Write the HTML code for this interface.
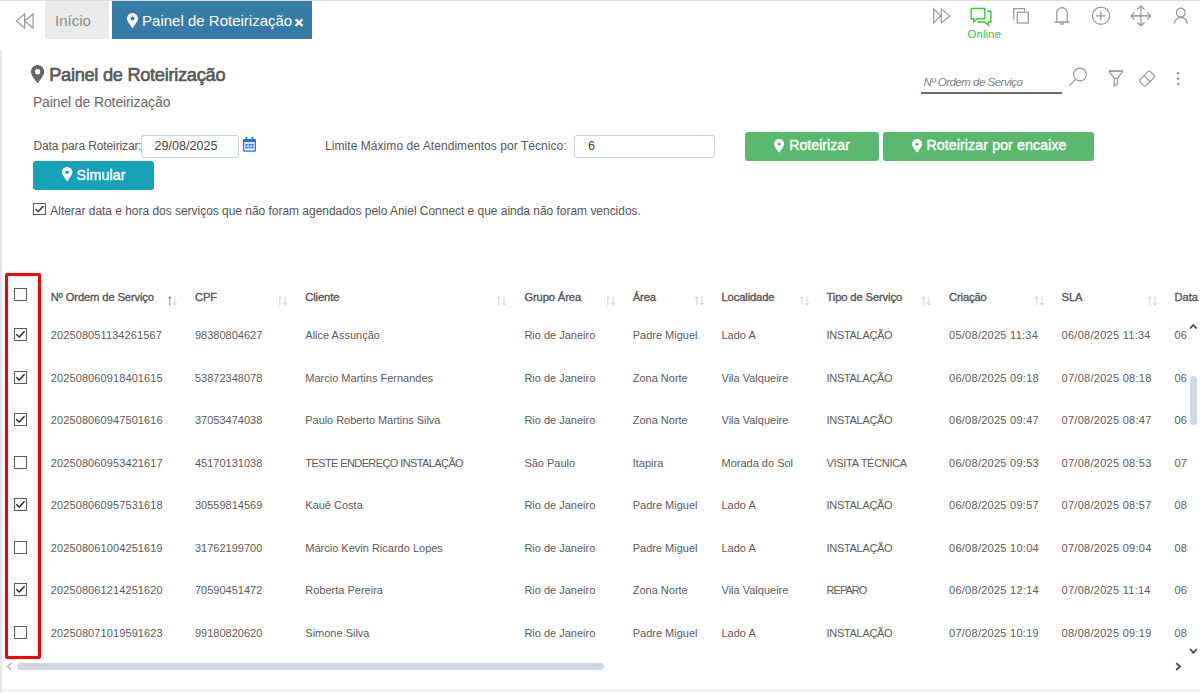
<!DOCTYPE html>
<html><head><meta charset="utf-8">
<style>
*{box-sizing:border-box}
html,body{margin:0;padding:0}
body{width:1200px;height:693px;overflow:hidden;position:relative;background:#fff;font-family:"Liberation Sans",sans-serif;color:#555}
.a{position:absolute;white-space:nowrap;line-height:1}
svg{position:absolute;overflow:visible}
.th{font-size:11.2px;font-weight:400;color:#555;-webkit-text-stroke:0.35px #555;letter-spacing:-0.12px}
.td{font-size:11px;color:#5a5a5a}
.cb{position:absolute;width:13px;height:13px;border:1px solid #5c5c5c;background:#fff}
.srt{position:absolute;width:11px;height:10px}
</style></head><body>

<!-- top bar -->
<div class="a" style="left:0;top:0;width:1200px;height:1px;background:#dcdcdc"></div>
<svg style="left:0;top:0" width="40" height="40" viewBox="0 0 40 40">
  <path d="M24.6 13.9 L16.4 21 L24.6 28.1 Z M33.1 13.9 L24.6 21 L33.1 28.1 Z" fill="none" stroke="#999" stroke-width="1.25" stroke-linejoin="miter"/>
</svg>
<div class="a" style="left:45px;top:1px;width:64px;height:38px;background:#ebebeb"></div>
<div class="a" style="left:55px;top:13.3px;font-size:15px;color:#8a8a8a">Início</div>
<div class="a" style="left:112px;top:1px;width:200px;height:38px;background:#367ca6"></div>
<svg style="left:127px;top:13px" width="11" height="14.8" viewBox="0 0 384 512" preserveAspectRatio="none"><path fill="#fff" d="M172.268 501.67C26.97 291.031 0 269.413 0 192 0 85.961 85.961 0 192 0s192 85.961 192 192c0 77.413-26.97 99.031-172.268 309.67-9.535 13.774-29.93 13.773-39.464 0zM192 262c38.66 0 70-31.34 70-70s-31.34-70-70-70-70 31.34-70 70 31.34 70 70 70z"/></svg>
<div class="a" style="left:142.1px;top:12.6px;font-size:15px;color:#fff">Painel de Roteirização</div>
<svg style="left:294px;top:17.5px" width="10" height="9" viewBox="0 0 10 9"><path d="M1.6 1.2 L8.4 7.9 M8.4 1.2 L1.6 7.9" stroke="#fff" stroke-width="2.2"/></svg>

<!-- right icons -->
<svg style="left:0;top:0" width="1200" height="45" viewBox="0 0 1200 45">
  <g fill="none" stroke="#999" stroke-width="1.2" stroke-linejoin="miter">
    <path d="M933.7 9 L940.6 15.9 L933.7 22.8 Z M941.3 9 L949.9 15.9 L941.3 22.8 Z"/>
  </g>
  <g fill="none" stroke="#33cc33" stroke-width="1.4" stroke-linejoin="miter">
    <path d="M971.2 8.5 H984.9 V18.7 H977.4 L973.8 21.9 V18.7 H971.2 Z"/>
    <path d="M987.1 11.3 H990.9 V22 H988.2 V25.1 L984.4 22 H977.1"/>
  </g>
  <g fill="none" stroke="#999" stroke-width="1.25">
    <path d="M1013.8 19.6 V8.7 H1024.6 V11.6"/>
    <rect x="1017.3" y="12.2" width="11" height="10.8"/>
    <path d="M1056.75 21.5 V12.8 A5.25 5.1 0 0 1 1067.25 12.8 V21.5"/>
    <path d="M1054.3 22.05 H1069.7" stroke-width="1.5"/>
    <path d="M1060.5 22.8 A1.5 1.6 0 0 0 1063.5 22.8"/>
    <circle cx="1101" cy="15.8" r="8.6" stroke-width="1.3"/>
    <path d="M1096 15.8 H1105.6 M1100.9 11.2 V20.3" stroke-width="1.3"/>
    <path d="M1130.9 15.9 H1150.9" stroke-width="1.6"/>
    <path d="M1140.9 5.9 V25.9"/>
    <path d="M1134.6 12.1 L1131 15.9 L1134.6 19.6 M1147.2 12.1 L1150.8 15.9 L1147.2 19.6 M1137.2 9.6 L1140.9 6 L1144.6 9.6 M1137.2 22.2 L1140.9 25.8 L1144.6 22.2" stroke-width="1.3"/>
    <circle cx="1180.8" cy="12.6" r="4.35" stroke-width="1.3"/>
    <path d="M1174.5 23.6 A6.4 6.2 0 0 1 1187.3 23.6" stroke-width="1.3"/>
  </g>
  <path d="M1062 6 L1063.4 8.2 H1060.6 Z" fill="#999"/>
</svg>
<div class="a" style="left:967.6px;top:29.4px;font-size:11.5px;color:#33cc33">Online</div>

<!-- left thin border and bottom strip -->
<div class="a" style="left:0;top:50px;width:2px;height:643px;background:#e3e7eb"></div>
<div class="a" style="left:2px;top:689px;width:1198px;height:4px;background:#f6f6f6"></div>

<!-- title -->
<svg style="left:31px;top:64.9px" width="13.2" height="18" viewBox="0 0 384 512" preserveAspectRatio="none"><path fill="#666" d="M172.268 501.67C26.97 291.031 0 269.413 0 192 0 85.961 85.961 0 192 0s192 85.961 192 192c0 77.413-26.97 99.031-172.268 309.67-9.535 13.774-29.93 13.773-39.464 0zM192 272c44.183 0 80-35.817 80-80s-35.817-80-80-80-80 35.817-80 80 35.817 80 80 80z"/></svg>
<div class="a" style="left:49.2px;top:66.3px;font-size:18.2px;color:#585858;-webkit-text-stroke:0.65px #585858;letter-spacing:-0.27px">Painel de Roteirização</div>
<div class="a" style="left:32.9px;top:94.5px;font-size:14px;color:#666;letter-spacing:-0.12px">Painel de Roteirização</div>

<!-- search -->
<div class="a" style="left:923.5px;top:75.9px;font-size:11.6px;font-style:italic;color:#808080;letter-spacing:-0.55px">Nº Ordem de Serviço</div>
<div class="a" style="left:921px;top:91.7px;width:141px;height:2px;background:#6a6a6a"></div>
<svg style="left:1060px;top:60px" width="130" height="35" viewBox="0 0 130 35">
  <circle cx="20" cy="14.6" r="6.4" fill="none" stroke="#999" stroke-width="1.3"/>
  <path d="M15.4 19.6 L9.2 25.6" stroke="#999" stroke-width="1.3"/>
  <path d="M48.7 11.1 H63.1 M49 11.1 L54.3 18.4 H57.5 L62.8 11.1 M54.3 18.4 V26 L57.5 23.7 V18.4" fill="none" stroke="#999" stroke-width="1.2" stroke-linejoin="miter"/>
  <path d="M63.1 11.1 H48.7" stroke="#999" stroke-width="1.5"/>
  <g transform="translate(87.05 18.6) rotate(-45)"><rect x="-7.3" y="-4.2" width="14.6" height="8.4" rx="1.6" fill="none" stroke="#999" stroke-width="1.2"/><path d="M0 -4.2 V4.2" stroke="#999" stroke-width="1.2"/></g>
  <circle cx="118.1" cy="13.2" r="1.3" fill="#999"/>
  <circle cx="118.1" cy="18.6" r="1.3" fill="#999"/>
  <circle cx="118.1" cy="24" r="1.3" fill="#999"/>
</svg>

<!-- form -->
<div class="a" style="left:33.4px;top:139.8px;font-size:12px;color:#555;letter-spacing:-0.12px">Data para Roteirizar:</div>
<div class="a" style="left:141.4px;top:135.4px;width:97.2px;height:22.2px;border:1px solid #ccd2da;border-radius:3px;background:#fff"></div>
<div class="a" style="left:154.6px;top:140.2px;font-size:12.6px;color:#444">29/08/2025</div>
<svg style="left:243px;top:137px" width="13" height="15" viewBox="0 0 13 15">
  <rect x="0" y="1.9" width="13" height="12.8" rx="1.3" fill="#1a75f0"/>
  <rect x="1.3" y="5.1" width="10.4" height="8.3" fill="#fff"/>
  <rect x="2.7" y="0" width="1.8" height="3" fill="#1a75f0"/>
  <rect x="8.5" y="0" width="1.8" height="3" fill="#1a75f0"/>
  <g fill="#1a75f0"><rect x="2.4" y="6.7" width="2.3" height="2"/><rect x="5.4" y="6.7" width="2.3" height="2"/><rect x="8.4" y="6.7" width="2.3" height="2"/><rect x="2.4" y="9.5" width="2.3" height="2"/><rect x="5.4" y="9.5" width="2.3" height="2"/><rect x="8.4" y="9.5" width="2.3" height="2"/></g>
</svg>
<div class="a" style="left:325px;top:139.8px;font-size:12px;color:#555;letter-spacing:0.06px">Limite Máximo de Atendimentos por Técnico:</div>
<div class="a" style="left:574px;top:135.3px;width:141px;height:22.7px;border:1px solid #ccd2da;border-radius:3px;background:#fff"></div>
<div class="a" style="left:588px;top:140.2px;font-size:12.6px;color:#444">6</div>

<div class="a" style="left:745px;top:132px;width:134px;height:29px;background:#5ab96f;border-radius:3px"></div>
<svg style="left:774px;top:138.5px" width="10.2" height="13.5" viewBox="0 0 384 512"><path fill="#fff" d="M172.268 501.67C26.97 291.031 0 269.413 0 192 0 85.961 85.961 0 192 0s192 85.961 192 192c0 77.413-26.97 99.031-172.268 309.67-9.535 13.774-29.93 13.773-39.464 0zM192 256c35.346 0 64-28.654 64-64s-28.654-64-64-64-64 28.654-64 64 28.654 64 64 64z"/></svg>
<div class="a" style="left:789.2px;top:137.8px;font-size:14.2px;color:#fff;-webkit-text-stroke:0.4px #fff">Roteirizar</div>
<div class="a" style="left:883px;top:132px;width:211px;height:29px;background:#5ab96f;border-radius:3px"></div>
<svg style="left:912px;top:138.5px" width="10.2" height="13.5" viewBox="0 0 384 512"><path fill="#fff" d="M172.268 501.67C26.97 291.031 0 269.413 0 192 0 85.961 85.961 0 192 0s192 85.961 192 192c0 77.413-26.97 99.031-172.268 309.67-9.535 13.774-29.93 13.773-39.464 0zM192 256c35.346 0 64-28.654 64-64s-28.654-64-64-64-64 28.654-64 64 28.654 64 64 64z"/></svg>
<div class="a" style="left:926.4px;top:137.8px;font-size:14.2px;color:#fff;-webkit-text-stroke:0.4px #fff;letter-spacing:0.1px">Roteirizar por encaixe</div>

<div class="a" style="left:33px;top:161px;width:121px;height:28.6px;background:#17a2b8;border-radius:3px"></div>
<svg style="left:62px;top:167px" width="10.4" height="14" viewBox="0 0 384 512"><path fill="#fff" d="M172.268 501.67C26.97 291.031 0 269.413 0 192 0 85.961 85.961 0 192 0s192 85.961 192 192c0 77.413-26.97 99.031-172.268 309.67-9.535 13.774-29.93 13.773-39.464 0zM192 256c35.346 0 64-28.654 64-64s-28.654-64-64-64-64 28.654-64 64 28.654 64 64 64z"/></svg>
<div class="a" style="left:76.6px;top:168.3px;font-size:14.2px;color:#fff;-webkit-text-stroke:0.4px #fff;letter-spacing:0.15px">Simular</div>

<div class="cb" style="left:33px;top:203px;width:12.5px;height:12px"></div>
<svg style="left:33px;top:203px" width="13" height="12" viewBox="0 0 13 12"><path d="M2.6 6 L5.2 8.6 L10.4 3" fill="none" stroke="#222" stroke-width="1.3"/></svg>
<div class="a" style="left:50.3px;top:204.8px;font-size:12px;color:#555;letter-spacing:-0.03px">Alterar data e hora dos serviços que não foram agendados pelo Aniel Connect e que ainda não foram vencidos.</div>

<!-- red highlight -->
<div class="a" style="left:5px;top:273px;width:36px;height:386px;border:3px solid #f00;border-radius:2px"></div>

<!--TABLE-->
<div class="a" style="left:0;top:270px;width:1200px;height:390px;overflow:hidden">
<div class="cb" style="left:14px;top:18.2px"></div>
<div class="a th" style="left:50.8px;top:21.79px">Nº Ordem de Serviço</div>
<svg style="left:167.0px;top:25.5px" width="11" height="10" viewBox="0 0 11 10"><path d="M2.8 9.5 V0.8 M1.1 2.5 L2.8 0.6 L4.5 2.5" fill="none" stroke="#8a8a8a" stroke-width="1"/><path d="M8 0.3 V9 M6.3 7.1 L8 9 L9.7 7.1" fill="none" stroke="#d2d2d2" stroke-width="1"/></svg>
<div class="a th" style="left:195px;top:21.79px">CPF</div>
<svg style="left:277.3px;top:25.5px" width="11" height="10" viewBox="0 0 11 10"><path d="M2.8 9.5 V0.8 M1.1 2.5 L2.8 0.6 L4.5 2.5" fill="none" stroke="#d2d2d2" stroke-width="1"/><path d="M8 0.3 V9 M6.3 7.1 L8 9 L9.7 7.1" fill="none" stroke="#d2d2d2" stroke-width="1"/></svg>
<div class="a th" style="left:305.3px;top:21.79px">Cliente</div>
<svg style="left:496.4px;top:25.5px" width="11" height="10" viewBox="0 0 11 10"><path d="M2.8 9.5 V0.8 M1.1 2.5 L2.8 0.6 L4.5 2.5" fill="none" stroke="#d2d2d2" stroke-width="1"/><path d="M8 0.3 V9 M6.3 7.1 L8 9 L9.7 7.1" fill="none" stroke="#d2d2d2" stroke-width="1"/></svg>
<div class="a th" style="left:524.4px;top:21.79px">Grupo Área</div>
<svg style="left:604.7px;top:25.5px" width="11" height="10" viewBox="0 0 11 10"><path d="M2.8 9.5 V0.8 M1.1 2.5 L2.8 0.6 L4.5 2.5" fill="none" stroke="#d2d2d2" stroke-width="1"/><path d="M8 0.3 V9 M6.3 7.1 L8 9 L9.7 7.1" fill="none" stroke="#d2d2d2" stroke-width="1"/></svg>
<div class="a th" style="left:632.7px;top:21.79px">Área</div>
<svg style="left:693.5px;top:25.5px" width="11" height="10" viewBox="0 0 11 10"><path d="M2.8 9.5 V0.8 M1.1 2.5 L2.8 0.6 L4.5 2.5" fill="none" stroke="#d2d2d2" stroke-width="1"/><path d="M8 0.3 V9 M6.3 7.1 L8 9 L9.7 7.1" fill="none" stroke="#d2d2d2" stroke-width="1"/></svg>
<div class="a th" style="left:721.5px;top:21.79px">Localidade</div>
<svg style="left:798.5px;top:25.5px" width="11" height="10" viewBox="0 0 11 10"><path d="M2.8 9.5 V0.8 M1.1 2.5 L2.8 0.6 L4.5 2.5" fill="none" stroke="#d2d2d2" stroke-width="1"/><path d="M8 0.3 V9 M6.3 7.1 L8 9 L9.7 7.1" fill="none" stroke="#d2d2d2" stroke-width="1"/></svg>
<div class="a th" style="left:826.5px;top:21.79px">Tipo de Serviço</div>
<svg style="left:921.0px;top:25.5px" width="11" height="10" viewBox="0 0 11 10"><path d="M2.8 9.5 V0.8 M1.1 2.5 L2.8 0.6 L4.5 2.5" fill="none" stroke="#d2d2d2" stroke-width="1"/><path d="M8 0.3 V9 M6.3 7.1 L8 9 L9.7 7.1" fill="none" stroke="#d2d2d2" stroke-width="1"/></svg>
<div class="a th" style="left:949.0px;top:21.79px">Criação</div>
<svg style="left:1033.6px;top:25.5px" width="11" height="10" viewBox="0 0 11 10"><path d="M2.8 9.5 V0.8 M1.1 2.5 L2.8 0.6 L4.5 2.5" fill="none" stroke="#d2d2d2" stroke-width="1"/><path d="M8 0.3 V9 M6.3 7.1 L8 9 L9.7 7.1" fill="none" stroke="#d2d2d2" stroke-width="1"/></svg>
<div class="a th" style="left:1061.6px;top:21.79px">SLA</div>
<svg style="left:1146.6px;top:25.5px" width="11" height="10" viewBox="0 0 11 10"><path d="M2.8 9.5 V0.8 M1.1 2.5 L2.8 0.6 L4.5 2.5" fill="none" stroke="#d2d2d2" stroke-width="1"/><path d="M8 0.3 V9 M6.3 7.1 L8 9 L9.7 7.1" fill="none" stroke="#d2d2d2" stroke-width="1"/></svg>
<div class="a th" style="left:1174.6px;top:21.79px">Data A</div>
<div class="cb" style="left:14px;top:58.0px"></div>
<svg style="left:14px;top:58.0px" width="13" height="13" viewBox="0 0 13 13"><path d="M2.2 6.3 L5.2 9 L10.6 3.3" fill="none" stroke="#222" stroke-width="1.35"/></svg>
<div class="a td" style="left:50.8px;top:59.80px;letter-spacing:0.1px;">202508051134261567</div>
<div class="a td" style="left:195px;top:59.80px;">98380804627</div>
<div class="a td" style="left:305.3px;top:59.80px;">Alice Assunção</div>
<div class="a td" style="left:524.4px;top:59.80px;">Rio de Janeiro</div>
<div class="a td" style="left:632.7px;top:59.80px;">Padre Miguel</div>
<div class="a td" style="left:721.5px;top:59.80px;">Lado A</div>
<div class="a td" style="left:826.5px;top:59.80px;letter-spacing:-0.3px;">INSTALAÇÃO</div>
<div class="a td" style="left:949.0px;top:59.80px;letter-spacing:0.27px;">05/08/2025 11:34</div>
<div class="a td" style="left:1061.6px;top:59.80px;letter-spacing:0.27px;">06/08/2025 11:34</div>
<div class="a td" style="left:1174.6px;top:59.80px;">06</div>
<div class="cb" style="left:14px;top:101.0px"></div>
<svg style="left:14px;top:101.0px" width="13" height="13" viewBox="0 0 13 13"><path d="M2.2 6.3 L5.2 9 L10.6 3.3" fill="none" stroke="#222" stroke-width="1.35"/></svg>
<div class="a td" style="left:50.8px;top:102.80px;letter-spacing:0.1px;">202508060918401615</div>
<div class="a td" style="left:195px;top:102.80px;">53872348078</div>
<div class="a td" style="left:305.3px;top:102.80px;">Marcio Martins Fernandes</div>
<div class="a td" style="left:524.4px;top:102.80px;">Rio de Janeiro</div>
<div class="a td" style="left:632.7px;top:102.80px;">Zona Norte</div>
<div class="a td" style="left:721.5px;top:102.80px;">Vila Valqueire</div>
<div class="a td" style="left:826.5px;top:102.80px;letter-spacing:-0.3px;">INSTALAÇÃO</div>
<div class="a td" style="left:949.0px;top:102.80px;letter-spacing:0.27px;">06/08/2025 09:18</div>
<div class="a td" style="left:1061.6px;top:102.80px;letter-spacing:0.27px;">07/08/2025 08:18</div>
<div class="a td" style="left:1174.6px;top:102.80px;">06</div>
<div class="cb" style="left:14px;top:143.0px"></div>
<svg style="left:14px;top:143.0px" width="13" height="13" viewBox="0 0 13 13"><path d="M2.2 6.3 L5.2 9 L10.6 3.3" fill="none" stroke="#222" stroke-width="1.35"/></svg>
<div class="a td" style="left:50.8px;top:144.80px;letter-spacing:0.1px;">202508060947501616</div>
<div class="a td" style="left:195px;top:144.80px;">37053474038</div>
<div class="a td" style="left:305.3px;top:144.80px;letter-spacing:-0.05px;">Paulo Roberto Martins Silva</div>
<div class="a td" style="left:524.4px;top:144.80px;">Rio de Janeiro</div>
<div class="a td" style="left:632.7px;top:144.80px;">Zona Norte</div>
<div class="a td" style="left:721.5px;top:144.80px;">Vila Valqueire</div>
<div class="a td" style="left:826.5px;top:144.80px;letter-spacing:-0.3px;">INSTALAÇÃO</div>
<div class="a td" style="left:949.0px;top:144.80px;letter-spacing:0.27px;">06/08/2025 09:47</div>
<div class="a td" style="left:1061.6px;top:144.80px;letter-spacing:0.27px;">07/08/2025 08:47</div>
<div class="a td" style="left:1174.6px;top:144.80px;">06</div>
<div class="cb" style="left:14px;top:186.0px"></div>
<div class="a td" style="left:50.8px;top:187.80px;letter-spacing:0.1px;">202508060953421617</div>
<div class="a td" style="left:195px;top:187.80px;">45170131038</div>
<div class="a td" style="left:305.3px;top:187.80px;letter-spacing:-0.6px;">TESTE ENDEREÇO INSTALAÇÃO</div>
<div class="a td" style="left:524.4px;top:187.80px;">São Paulo</div>
<div class="a td" style="left:632.7px;top:187.80px;">Itapira</div>
<div class="a td" style="left:721.5px;top:187.80px;">Morada do Sol</div>
<div class="a td" style="left:826.5px;top:187.80px;letter-spacing:-0.3px;">VISITA TÉCNICA</div>
<div class="a td" style="left:949.0px;top:187.80px;letter-spacing:0.27px;">06/08/2025 09:53</div>
<div class="a td" style="left:1061.6px;top:187.80px;letter-spacing:0.27px;">07/08/2025 08:53</div>
<div class="a td" style="left:1174.6px;top:187.80px;">07</div>
<div class="cb" style="left:14px;top:228.0px"></div>
<svg style="left:14px;top:228.0px" width="13" height="13" viewBox="0 0 13 13"><path d="M2.2 6.3 L5.2 9 L10.6 3.3" fill="none" stroke="#222" stroke-width="1.35"/></svg>
<div class="a td" style="left:50.8px;top:229.80px;letter-spacing:0.1px;">202508060957531618</div>
<div class="a td" style="left:195px;top:229.80px;">30559814569</div>
<div class="a td" style="left:305.3px;top:229.80px;">Kauê Costa</div>
<div class="a td" style="left:524.4px;top:229.80px;">Rio de Janeiro</div>
<div class="a td" style="left:632.7px;top:229.80px;">Padre Miguel</div>
<div class="a td" style="left:721.5px;top:229.80px;">Lado A</div>
<div class="a td" style="left:826.5px;top:229.80px;letter-spacing:-0.3px;">INSTALAÇÃO</div>
<div class="a td" style="left:949.0px;top:229.80px;letter-spacing:0.27px;">06/08/2025 09:57</div>
<div class="a td" style="left:1061.6px;top:229.80px;letter-spacing:0.27px;">07/08/2025 08:57</div>
<div class="a td" style="left:1174.6px;top:229.80px;">08</div>
<div class="cb" style="left:14px;top:271.0px"></div>
<div class="a td" style="left:50.8px;top:272.80px;letter-spacing:0.1px;">202508061004251619</div>
<div class="a td" style="left:195px;top:272.80px;">31762199700</div>
<div class="a td" style="left:305.3px;top:272.80px;">Márcio Kevin Ricardo Lopes</div>
<div class="a td" style="left:524.4px;top:272.80px;">Rio de Janeiro</div>
<div class="a td" style="left:632.7px;top:272.80px;">Padre Miguel</div>
<div class="a td" style="left:721.5px;top:272.80px;">Lado A</div>
<div class="a td" style="left:826.5px;top:272.80px;letter-spacing:-0.3px;">INSTALAÇÃO</div>
<div class="a td" style="left:949.0px;top:272.80px;letter-spacing:0.27px;">06/08/2025 10:04</div>
<div class="a td" style="left:1061.6px;top:272.80px;letter-spacing:0.27px;">07/08/2025 09:04</div>
<div class="a td" style="left:1174.6px;top:272.80px;">08</div>
<div class="cb" style="left:14px;top:313.0px"></div>
<svg style="left:14px;top:313.0px" width="13" height="13" viewBox="0 0 13 13"><path d="M2.2 6.3 L5.2 9 L10.6 3.3" fill="none" stroke="#222" stroke-width="1.35"/></svg>
<div class="a td" style="left:50.8px;top:314.80px;letter-spacing:0.1px;">202508061214251620</div>
<div class="a td" style="left:195px;top:314.80px;">70590451472</div>
<div class="a td" style="left:305.3px;top:314.80px;">Roberta Pereira</div>
<div class="a td" style="left:524.4px;top:314.80px;">Rio de Janeiro</div>
<div class="a td" style="left:632.7px;top:314.80px;">Zona Norte</div>
<div class="a td" style="left:721.5px;top:314.80px;">Vila Valqueire</div>
<div class="a td" style="left:826.5px;top:314.80px;letter-spacing:-0.95px;">REPARO</div>
<div class="a td" style="left:949.0px;top:314.80px;letter-spacing:0.27px;">06/08/2025 12:14</div>
<div class="a td" style="left:1061.6px;top:314.80px;letter-spacing:0.27px;">07/08/2025 11:14</div>
<div class="a td" style="left:1174.6px;top:314.80px;">06</div>
<div class="cb" style="left:14px;top:356.0px"></div>
<div class="a td" style="left:50.8px;top:357.80px;letter-spacing:0.1px;">202508071019591623</div>
<div class="a td" style="left:195px;top:357.80px;">99180820620</div>
<div class="a td" style="left:305.3px;top:357.80px;">Simone Silva</div>
<div class="a td" style="left:524.4px;top:357.80px;">Rio de Janeiro</div>
<div class="a td" style="left:632.7px;top:357.80px;">Padre Miguel</div>
<div class="a td" style="left:721.5px;top:357.80px;">Lado A</div>
<div class="a td" style="left:826.5px;top:357.80px;letter-spacing:-0.3px;">INSTALAÇÃO</div>
<div class="a td" style="left:949.0px;top:357.80px;letter-spacing:0.27px;">07/08/2025 10:19</div>
<div class="a td" style="left:1061.6px;top:357.80px;letter-spacing:0.27px;">08/08/2025 09:19</div>
<div class="a td" style="left:1174.6px;top:357.80px;">08</div>
</div>
<!--/TABLE-->

<!-- scrollbars -->
<svg style="left:1189px;top:322px" width="9" height="8" viewBox="0 0 9 8"><path d="M1 6.5 L4.3 3 L7.6 6.5" fill="none" stroke="#4a4a4a" stroke-width="1.8"/></svg>
<div class="a" style="left:1190.4px;top:376px;width:6.5px;height:49px;background:#d0d8e0;border-radius:3px"></div>
<svg style="left:1189px;top:647px" width="9" height="9" viewBox="0 0 9 9"><path d="M1 2 L4.4 5.8 L7.8 2" fill="none" stroke="#4a4a4a" stroke-width="1.8"/></svg>
<svg style="left:1174px;top:662px" width="9" height="9" viewBox="0 0 9 9"><path d="M2.2 1.2 L6 4.6 L2.2 8" fill="none" stroke="#4a4a4a" stroke-width="1.8"/></svg>
<svg style="left:5px;top:662px" width="9" height="9" viewBox="0 0 9 9"><path d="M6.6 1.2 L2.6 4.5 L6.6 7.8" fill="none" stroke="#bbb" stroke-width="1.6"/></svg>
<div class="a" style="left:17px;top:663px;width:587px;height:7px;background:#d0d9e1;border-radius:3.5px"></div>

</body></html>
